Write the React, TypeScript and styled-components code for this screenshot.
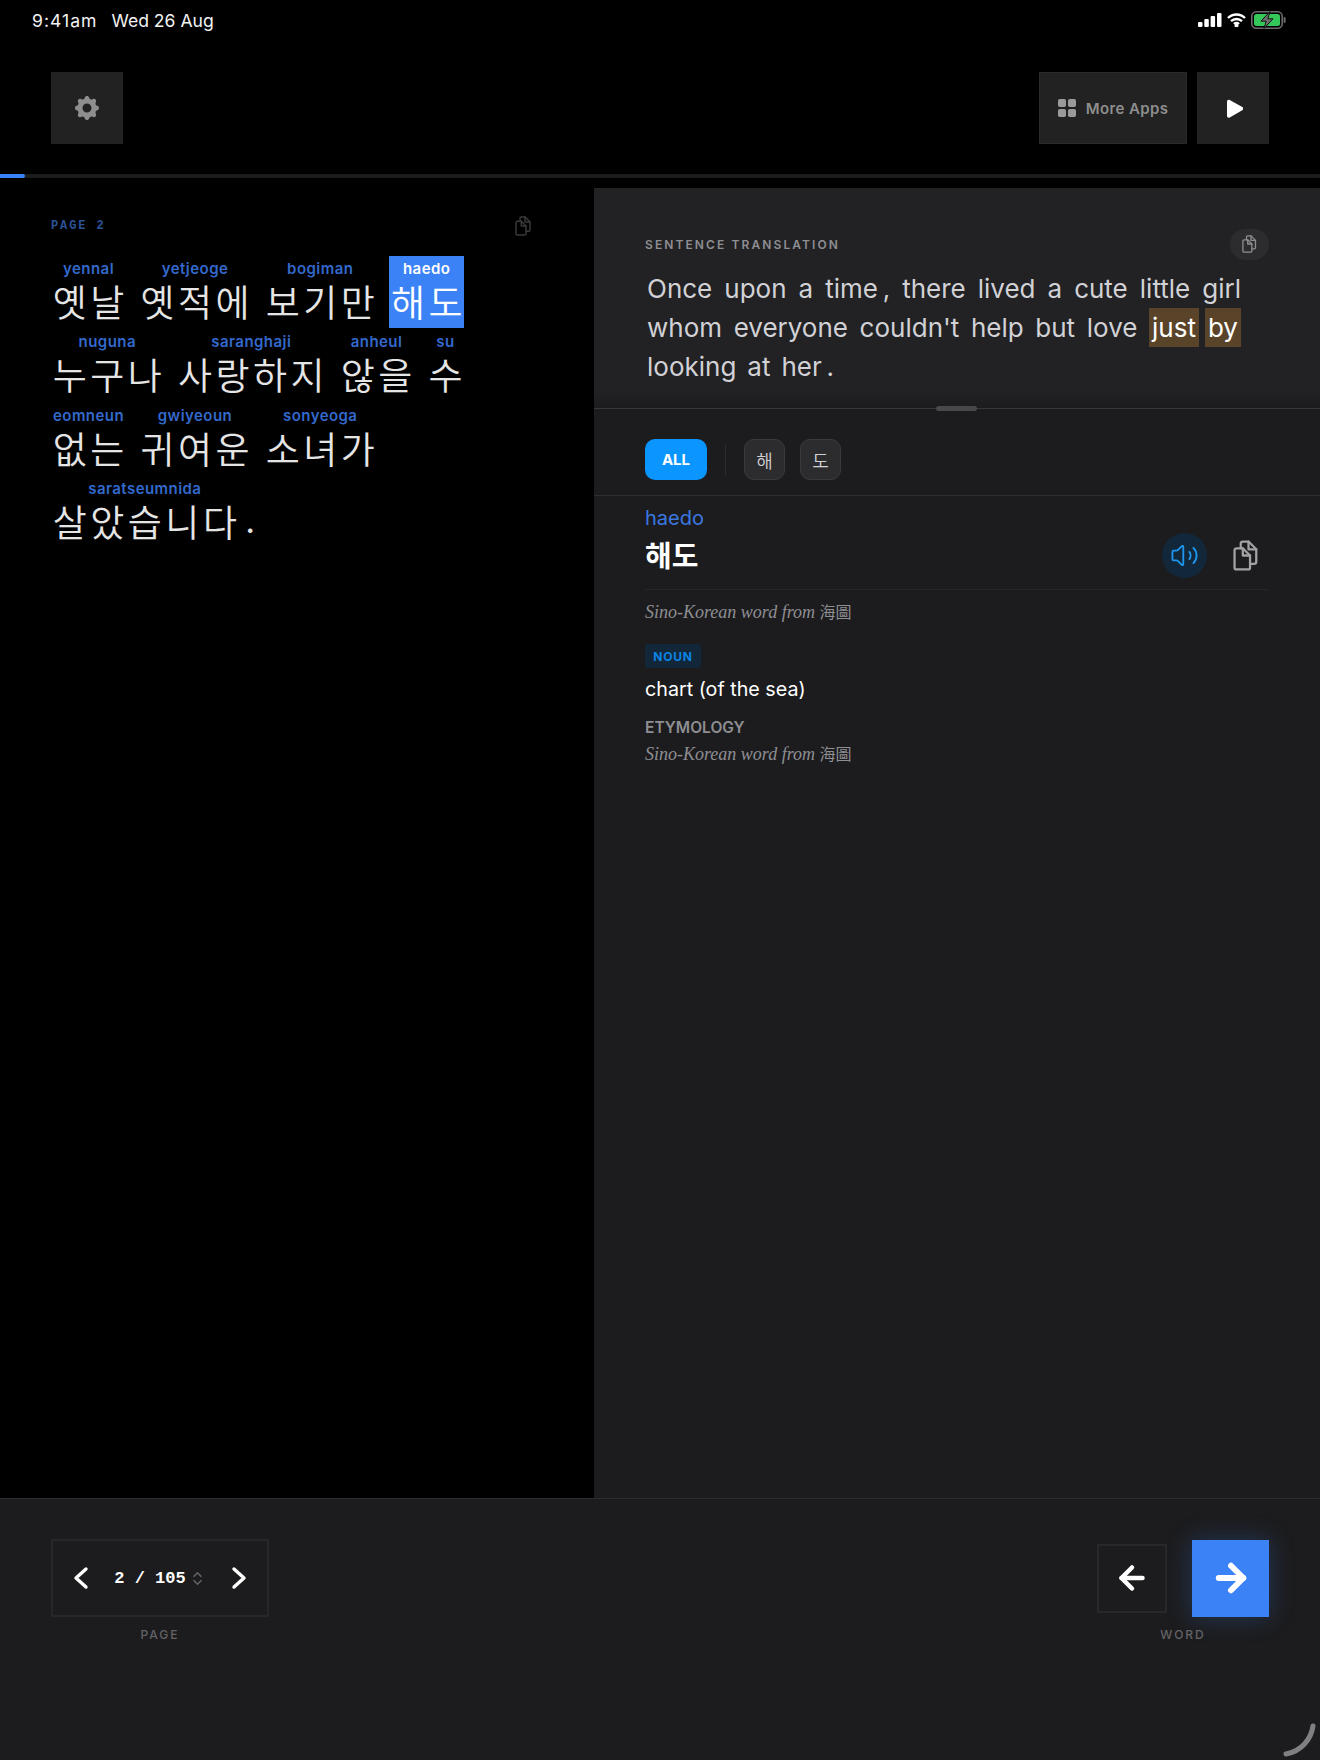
import React from "react";
import styled, { createGlobalStyle } from "styled-components";
import { ArrowLeft, ArrowRight, ChevronsUpDown, Volume2 } from "lucide-react";
import { HiCog } from "react-icons/hi";

const Global = createGlobalStyle`
  html, body { margin: 0; padding: 0; background: #000; }
  * { box-sizing: border-box; }
  body { font-family: Inter, "Noto Sans CJK KR", sans-serif; }
`;

const Page = styled.div`
  width: 1320px;
  height: 1760px;
  background: #000;
  display: flex;
  flex-direction: column;
  position: relative;
  overflow: hidden;
`;

const StatusBar = styled.div`
  height: 42px;
  padding: 0 34px 2px 32px;
  display: flex;
  align-items: center;
  justify-content: space-between;
  color: #f2f2f2;
  font-size: 17.6px;
`;
const StatusLeft = styled.div`
  display: flex;
  gap: 14px;
`;
const StatusTime = styled.span`
  letter-spacing: 1px;
`;
const StatusIcons = styled.div`
  display: flex;
  align-items: center;
  gap: 5px;
`;

const Header = styled.div`
  height: 132px;
  padding: 30px 51px;
  display: flex;
  justify-content: space-between;
`;
const HeaderGroup = styled.div`
  display: flex;
  gap: 10px;
`;
const SquareButton = styled.div`
  width: 72px;
  height: 72px;
  background: #222222;
  display: flex;
  align-items: center;
  justify-content: center;
  color: #8e8e8e;
`;
const AppsButton = styled.div`
  width: 148px;
  height: 72px;
  background: #222222;
  border: 1px solid #2a2a2a;
  display: flex;
  align-items: center;
  justify-content: center;
  gap: 10px;
  color: #8e8e8e;
  font-size: 15px;
  font-weight: 600;
  letter-spacing: 0.4px;
`;

const Track = styled.div`
  height: 4px;
  background: #1c1c1e;
`;
const TrackFill = styled.div`
  height: 100%;
  width: 25px;
  background: #3b82f6;
  border-radius: 0 2px 2px 0;
`;

const Main = styled.div`
  flex: 1;
  margin-top: 10px;
  display: flex;
  min-height: 0;
`;
const Reader = styled.div`
  width: 594px;
  padding: 28px 51px 0;
`;
const ReaderHead = styled.div`
  height: 20px;
  display: flex;
  align-items: center;
  justify-content: space-between;
  padding-right: 12px;
  margin-bottom: 20px;
  color: #3a3a3c;
`;
const PageTag = styled.div`
  font-family: "Liberation Mono", monospace;
  font-size: 12px;
  font-weight: 700;
  letter-spacing: 1.9px;
  color: #2c5296;
  white-space: pre;
`;
const Verse = styled.div`
  display: flex;
  flex-direction: column;
  gap: 1.4px;
`;
const VerseRow = styled.div`
  display: flex;
  gap: 12.6px;
  height: 72px;
`;
const Word = styled.div<{ $active?: boolean }>`
  height: 72px;
  display: flex;
  flex-direction: column;
  align-items: center;
  background: ${(p) => (p.$active ? "#3b82f6" : "transparent")};
  color: ${(p) => (p.$active ? "#ffffff" : "#e5e5e5")};
`;
const Roman = styled.div<{ $active?: boolean }>`
  height: 24px;
  line-height: 25px;
  font-size: 15px;
  font-weight: 600;
  letter-spacing: 0.45px;
  white-space: nowrap;
  color: ${(p) => (p.$active ? "#ffffff" : "#3369cc")};
`;
const Hangul = styled.div`
  height: 48px;
  line-height: 42px;
  padding-left: 1.75px;
  margin-right: -1.75px;
  font-family: "Noto Sans CJK KR", sans-serif;
  font-size: 37px;
  font-weight: 350;
  letter-spacing: 3.5px;
  white-space: nowrap;
`;
const Stop = styled.div`
  align-self: flex-end;
  height: 48px;
  line-height: 42px;
  margin-left: -6px;
  font-size: 34px;
  color: #e5e5e5;
`;

const Side = styled.div`
  flex: 1;
  background: #1c1c1e;
  display: flex;
  flex-direction: column;
  min-width: 0;
`;
const Translation = styled.div`
  height: 221px;
  padding: 40px 51px 0;
  background: linear-gradient(#222224 0 92%, #1c1c1e 100%);
  border-bottom: 1px solid #38383a;
  position: relative;
`;
const TransHead = styled.div`
  height: 32px;
  display: flex;
  align-items: center;
  justify-content: space-between;
  margin-bottom: 9px;
`;
const Eyebrow = styled.div`
  font-size: 12px;
  font-weight: 600;
  letter-spacing: 2.1px;
  color: #8e8e93;
`;
const Pill = styled.div`
  width: 39px;
  height: 31px;
  border-radius: 16px;
  background: #2c2c2e;
  color: #8e8e93;
  display: flex;
  align-items: center;
  justify-content: center;
`;
const TransLine = styled.div<{ $natural?: boolean }>`
  height: 39px;
  margin: 0 28px 0 2px;
  display: flex;
  align-items: center;
  justify-content: ${(p) => (p.$natural ? "flex-start" : "space-between")};
  gap: ${(p) => (p.$natural ? "11px" : "0")};
  font-size: 26px;
  color: #d1d1d6;
  white-space: nowrap;
`;
const Mark = styled.span`
  height: 39px;
  line-height: 39px;
  padding: 0 3px;
  background: #5a4429;
  color: #fff;
`;
const MarkGroup = styled.span`
  display: flex;
  gap: 6px;
`;
const Handle = styled.div`
  position: absolute;
  left: 342px;
  bottom: -3px;
  width: 41px;
  height: 5px;
  border-radius: 3px;
  background: #48484a;
`;

const Chips = styled.div`
  padding: 30px 51px 15px;
  display: flex;
  align-items: center;
  border-bottom: 1px solid #2f2f31;
`;
const AllChip = styled.div`
  width: 62px;
  height: 41px;
  border-radius: 10px;
  background: #0a95ff;
  color: #fff;
  font-size: 15px;
  font-weight: 700;
  display: flex;
  align-items: center;
  justify-content: center;
`;
const ChipRule = styled.div`
  width: 1px;
  height: 31px;
  background: #2c2c2e;
  margin: 0 18px;
`;
const Chip = styled.div`
  width: 41px;
  height: 41px;
  margin-right: 15px;
  border-radius: 10px;
  background: #2c2c2e;
  border: 1px solid #3a3a3c;
  color: #d1d1d6;
  font-family: "Noto Sans CJK KR", sans-serif;
  font-size: 18px;
  font-weight: 350;
  display: flex;
  align-items: center;
  justify-content: center;
`;

const Detail = styled.div`
  padding: 9px 51px 0;
`;
const DetailRoman = styled.div`
  height: 28px;
  line-height: 26px;
  font-size: 20px;
  color: #3b78e0;
`;
const TitleRow = styled.div`
  display: flex;
  align-items: center;
  justify-content: space-between;
  height: 57px;
  padding: 0 11px 11px 0;
  border-bottom: 1px solid #262628;
`;
const Title = styled.div`
  margin-top: -4px;
  font-family: "Noto Sans CJK KR", sans-serif;
  font-size: 29px;
  font-weight: 700;
  color: #fff;
`;
const TitleActions = styled.div`
  display: flex;
  align-items: center;
  gap: 26px;
  color: #a1a1a6;
`;
const SoundButton = styled.div`
  width: 45px;
  height: 45px;
  border-radius: 50%;
  background: #12283a;
  color: #1e96f0;
  display: flex;
  align-items: center;
  justify-content: center;
`;
const Origin = styled.div<{ $top: number }>`
  margin-top: ${(p) => p.$top}px;
  height: 22px;
  line-height: 22px;
  font-family: "Liberation Serif", "Noto Sans CJK TC", serif;
  font-style: italic;
  font-size: 18px;
  color: #8e8e93;
`;
const OriginHan = styled.span`
  font-family: "Noto Sans CJK TC", serif;
  font-style: normal;
  font-size: 16px;
`;
const Badge = styled.div`
  margin-top: 22px;
  width: 56px;
  height: 24px;
  border-radius: 4px;
  background: #12283a;
  color: #0a84e6;
  font-size: 12px;
  font-weight: 700;
  letter-spacing: 0.8px;
  display: flex;
  align-items: center;
  justify-content: center;
`;
const Meaning = styled.div`
  margin-top: 8px;
  height: 26px;
  line-height: 26px;
  font-size: 19.7px;
  color: #fff;
`;
const EtymLabel = styled.div`
  margin-top: 16px;
  height: 20px;
  line-height: 20px;
  font-size: 15.5px;
  font-weight: 600;
  color: #8e8e93;
`;

const Footer = styled.div`
  height: 262px;
  background: #1c1c1e;
  border-top: 1px solid #2c2c2e;
  padding: 40px 51px 0;
  display: flex;
  justify-content: space-between;
  align-items: flex-start;
`;
const FooterGroup = styled.div`
  display: flex;
  flex-direction: column;
  align-items: center;
`;
const Pager = styled.div`
  width: 218px;
  height: 78px;
  border: 2px solid #27272a;
  padding: 0 20px;
  display: flex;
  align-items: center;
  justify-content: space-between;
  color: #fff;
`;
const PagerValue = styled.div`
  display: flex;
  align-items: center;
  gap: 3px;
  color: #636366;
`;
const PagerText = styled.span`
  font-family: "Liberation Mono", monospace;
  font-size: 17px;
  font-weight: 700;
  color: #fff;
`;
const FootLabel = styled.div`
  margin-top: 10px;
  height: 16px;
  line-height: 16px;
  font-size: 12px;
  font-weight: 500;
  letter-spacing: 2px;
  color: #636366;
`;
const NavRow = styled.div`
  height: 78px;
  display: flex;
  align-items: center;
  gap: 25px;
`;
const PrevButton = styled.div`
  width: 70px;
  height: 69px;
  border: 2px solid #28282a;
  display: flex;
  align-items: center;
  justify-content: center;
  color: #fff;
`;
const NextButton = styled.div`
  width: 77px;
  height: 77px;
  background: #3b82f6;
  box-shadow: 0 0 24px rgba(59, 130, 246, 0.28);
  display: flex;
  align-items: center;
  justify-content: center;
  color: #fff;
`;
const CornerArc = styled.svg`
  position: absolute;
  right: 4px;
  bottom: 3px;
`;

const CopyIcon = ({ size = 24 }: { size?: number }) => (
  <svg width={(size * 24) / 30} height={size} viewBox="0 0 24 30" fill="none" stroke="currentColor" strokeWidth="2.2" strokeLinejoin="round" strokeLinecap="round">
    <path d="M3.5 8h6l7 7v11.5a2 2 0 0 1-2 2h-11a2 2 0 0 1-2-2V10a2 2 0 0 1 2-2z" />
    <path d="M9.5 8v7h7" />
    <path d="M7.5 8V3.5a2 2 0 0 1 2-2H15l7.5 7.5v12a2 2 0 0 1-2 2h-4" />
    <path d="M15 1.5V9h7.5" />
  </svg>
);

const Chevron = ({ right }: { right?: boolean }) => (
  <svg width="16" height="24" viewBox="0 0 16 24" fill="none" stroke="currentColor" strokeWidth="3.4" strokeLinecap="round" strokeLinejoin="round">
    <path d={right ? "M3 3l10 9-10 9" : "M13 3L3 12l10 9"} />
  </svg>
);

const Signal = () => (
  <svg width="24" height="14" viewBox="0 0 24 14" fill="#fff">
    <rect x="0" y="9" width="4.5" height="5" rx="1" />
    <rect x="6.3" y="6" width="4.5" height="8" rx="1" />
    <rect x="12.6" y="3" width="4.5" height="11" rx="1" />
    <rect x="19" y="0" width="4.5" height="14" rx="1" />
  </svg>
);
const Wifi = () => (
  <svg width="19" height="14" viewBox="0 0 19 14" fill="none" stroke="#fff" strokeWidth="2.4">
    <path d="M1 5a12 12 0 0 1 17 0" />
    <path d="M4 8.2a8 8 0 0 1 11 0" />
    <path d="M7 11a3.6 3.6 0 0 1 5 0" />
    <circle cx="9.5" cy="12.6" r="0.8" fill="#fff" />
  </svg>
);
const Battery = () => (
  <svg width="35" height="18" viewBox="0 0 35 18">
    <rect x="0.8" y="0.8" width="30.4" height="16.4" rx="4.5" fill="none" stroke="#6a6a6a" strokeWidth="1.6" />
    <rect x="3" y="3" width="26" height="12" rx="2.5" fill="#34c759" />
    <rect x="32.6" y="6" width="2" height="6" rx="1" fill="#6a6a6a" />
    <path d="M19 0.6 10 10.2h5.2L13 17.4 22 7.8h-5.2z" fill="#6e6e6e" stroke="#111" strokeWidth="1" />
  </svg>
);
const AppsIcon = () => (
  <svg width="18" height="18" viewBox="0 0 18 18" fill="#9a9a9a">
    <rect x="0" y="0" width="8" height="8" rx="1.8" />
    <rect x="10" y="0" width="8" height="8" rx="1.8" />
    <rect x="0" y="10" width="8" height="8" rx="1.8" />
    <rect x="10" y="10" width="8" height="8" rx="1.8" />
  </svg>
);
const PlayIcon = () => (
  <svg width="20" height="19" viewBox="-3 0 20 19" fill="#fff">
    <path d="M1 2.4C1 1 2.5.2 3.7.9l12.6 7.2c1.2.7 1.2 2.4 0 3.1L3.7 18.4C2.5 19.1 1 18.2 1 16.9z" />
  </svg>
);

const rows = [
  [["yennal", "옛날"], ["yetjeoge", "옛적에"], ["bogiman", "보기만"], ["haedo", "해도"]],
  [["nuguna", "누구나"], ["saranghaji", "사랑하지"], ["anheul", "않을"], ["su", "수"]],
  [["eomneun", "없는"], ["gwiyeoun", "귀여운"], ["sonyeoga", "소녀가"]],
  [["saratseumnida", "살았습니다"]],
];
const line1 = ["Once", "upon", "a", "time\u2009,", "there", "lived", "a", "cute", "little", "girl"];
const line2 = ["whom", "everyone", "couldn't", "help", "but", "love"];

export default function App() {
  return (
    <Page>
      <Global />
      <StatusBar>
        <StatusLeft>
          <StatusTime>9:41am</StatusTime>
          <span>Wed 26 Aug</span>
        </StatusLeft>
        <StatusIcons>
          <Signal />
          <Wifi />
          <Battery />
        </StatusIcons>
      </StatusBar>
      <Header>
        <SquareButton>
          <HiCog size={30} />
        </SquareButton>
        <HeaderGroup>
          <AppsButton>
            <AppsIcon />
            More Apps
          </AppsButton>
          <SquareButton>
            <PlayIcon />
          </SquareButton>
        </HeaderGroup>
      </Header>
      <Track>
        <TrackFill />
      </Track>
      <Main>
        <Reader>
          <ReaderHead>
            <PageTag>PAGE 2</PageTag>
            <CopyIcon size={20} />
          </ReaderHead>
          <Verse>
            {rows.map((row, i) => (
              <VerseRow key={i}>
                {row.map(([roman, text]) => {
                  const active = roman === "haedo";
                  return (
                    <Word key={roman} $active={active}>
                      <Roman $active={active}>{roman}</Roman>
                      <Hangul>{text}</Hangul>
                    </Word>
                  );
                })}
                {i === 3 && <Stop>.</Stop>}
              </VerseRow>
            ))}
          </Verse>
        </Reader>
        <Side>
          <Translation>
            <TransHead>
              <Eyebrow>SENTENCE TRANSLATION</Eyebrow>
              <Pill>
                <CopyIcon size={18} />
              </Pill>
            </TransHead>
            <TransLine>
              {line1.map((w, i) => (
                <span key={i}>{w}</span>
              ))}
            </TransLine>
            <TransLine>
              {line2.map((w) => (
                <span key={w}>{w}</span>
              ))}
              <MarkGroup>
                <Mark>just</Mark>
                <Mark>by</Mark>
              </MarkGroup>
            </TransLine>
            <TransLine $natural>
              <span>looking</span>
              <span>at</span>
              <span>her&#8201;.</span>
            </TransLine>
            <Handle />
          </Translation>
          <Chips>
            <AllChip>ALL</AllChip>
            <ChipRule />
            <Chip>해</Chip>
            <Chip>도</Chip>
          </Chips>
          <Detail>
            <DetailRoman>haedo</DetailRoman>
            <TitleRow>
              <Title>해도</Title>
              <TitleActions>
                <SoundButton>
                  <Volume2 size={29} strokeWidth={1.5} />
                </SoundButton>
                <CopyIcon size={31} />
              </TitleActions>
            </TitleRow>
            <Origin $top={10}>
              Sino-Korean word from <OriginHan>海圖</OriginHan>
            </Origin>
            <Badge>NOUN</Badge>
            <Meaning>chart (of the sea)</Meaning>
            <EtymLabel>ETYMOLOGY</EtymLabel>
            <Origin $top={4}>
              Sino-Korean word from <OriginHan>海圖</OriginHan>
            </Origin>
          </Detail>
        </Side>
      </Main>
      <Footer>
        <FooterGroup>
          <Pager>
            <Chevron />
            <PagerValue>
              <PagerText>2 / 105</PagerText>
              <ChevronsUpDown size={17} strokeWidth={2} />
            </PagerValue>
            <Chevron right />
          </Pager>
          <FootLabel>PAGE</FootLabel>
        </FooterGroup>
        <FooterGroup>
          <NavRow>
            <PrevButton>
              <ArrowLeft size={36} strokeWidth={3} />
            </PrevButton>
            <NextButton>
              <ArrowRight size={42} strokeWidth={3.4} />
            </NextButton>
          </NavRow>
          <FootLabel>WORD</FootLabel>
        </FooterGroup>
      </Footer>
      <CornerArc width="34" height="34" viewBox="0 0 34 34" fill="none">
        <path d="M31 3C29 16 20 28 4 31" stroke="#808084" strokeWidth="5" strokeLinecap="round" />
      </CornerArc>
    </Page>
  );
}
